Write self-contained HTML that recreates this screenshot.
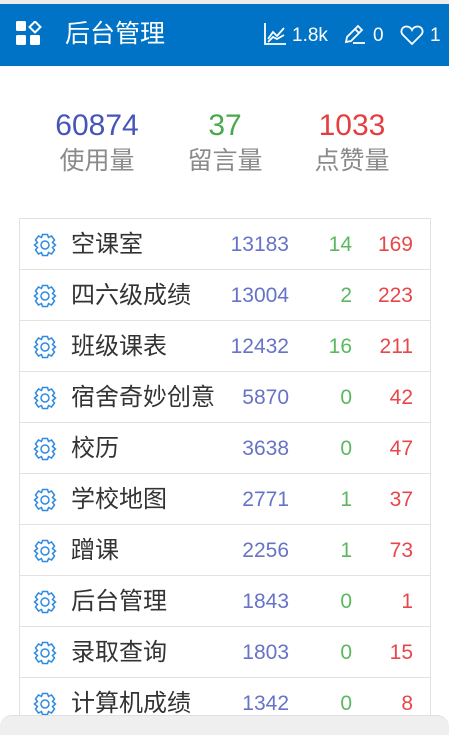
<!DOCTYPE html>
<html><head><meta charset="utf-8">
<style>
*{margin:0;padding:0;box-sizing:border-box}
body{width:449px;height:729px;overflow:hidden;background:#fff;font-family:"Liberation Sans","Noto Sans CJK SC",sans-serif;position:relative}
.top{position:absolute;left:0;top:0;width:449px;height:4px;background:#ececec}
.hdr{position:absolute;left:0;top:4px;width:449px;height:62px;background:#0073c6;color:#fff}
.hdr .t{position:absolute;left:65px;top:15px;font-size:25px;line-height:30px}
.hdr .r{position:absolute;top:20px;font-size:19px;line-height:24px}
.stat{position:absolute;top:108px;width:130px;text-align:center}
.stat .n{font-size:30px;line-height:36px}
.stat .l{font-size:25px;line-height:32px;color:#8a8a8a;margin-top:1px}
.tbl{position:absolute;left:19px;top:218px;width:412px;border:1px solid #e2e2e2;border-bottom:none}
.row{height:51px;border-bottom:1px solid #e2e2e2;position:relative}
.row svg{position:absolute;left:13px;top:14px}
.row .nm{position:absolute;left:51px;top:11px;font-size:24px;line-height:30px;color:#333}
.row .a,.row .b,.row .c{position:absolute;top:12px;font-size:21px;line-height:28px;text-align:right}
.a{right:141px;color:#6673c6}
.b{right:78px;color:#5cb860}
.c{right:17px;color:#e8474a}
.bot{position:absolute;left:0;top:715px;width:449px;height:20px;background:#efefef;border-radius:12px 12px 0 0;border-top:1px solid #e0e0e0}
</style></head><body>
<div class="top"></div>
<div class="hdr">
<svg style="position:absolute;left:16px;top:17px" width="26" height="26" viewBox="0 0 26 26" fill="#fff"><rect x="0" y="0" width="10" height="10" rx="1.5"/><rect x="0" y="14" width="10" height="10" rx="1.5"/><rect x="14" y="14" width="10" height="10" rx="1.5"/><path d="M19 0.5 L24.5 6 L19 11.5 L13.5 6Z" fill="none" stroke="#fff" stroke-width="2"/></svg>
<div class="t">后台管理</div>
<svg style="position:absolute;left:263px;top:18px" width="24" height="24" viewBox="0 0 24 24" fill="none" stroke="#fff" stroke-width="1.8"><path d="M2 1V22H23"/><path d="M5 17L10 10L14 14L21 6"/><path d="M5 20L10 15L14 17L21 13"/></svg>
<div class="r" style="left:292px">1.8k</div>
<svg style="position:absolute;left:343px;top:19px" width="24" height="22" viewBox="0 0 24 22" fill="none" stroke="#fff" stroke-width="1.8"><path d="M3 19L4 14L15 3L19 7L8 18Z"/><path d="M12 6L16 10"/><path d="M10 20H22"/></svg>
<div class="r" style="left:373px">0</div>
<svg style="position:absolute;left:400px;top:20px" width="24" height="22" viewBox="0 0 24 22" fill="none" stroke="#fff" stroke-width="1.8"><path d="M12 20L3 11C0 8 1.5 3 6 2.5C9 2.3 11 4 12 6C13 4 15 2.3 18 2.5C22.5 3 24 8 21 11Z"/></svg>
<div class="r" style="left:430px">1</div>
</div>
<div class="stat" style="left:32px"><div class="n" style="color:#4555b8">60874</div><div class="l">使用量</div></div>
<div class="stat" style="left:160px"><div class="n" style="color:#4aa84e">37</div><div class="l">留言量</div></div>
<div class="stat" style="left:287px"><div class="n" style="color:#e53e40">1033</div><div class="l">点赞量</div></div>
<div class="tbl">
<div class="row"><svg width="24" height="24" viewBox="0 0 24 24" fill="none" stroke="#2f8be0" stroke-width="1.5"><path d="M9.5 1.5H14.5L15.5 4.5L18.5 3L21.5 7L19.5 9.5L22.5 12L19.5 14.5L21.5 17L18.5 21L15.5 19.5L14.5 22.5H9.5L8.5 19.5L5.5 21L2.5 17L4.5 14.5L1.5 12L4.5 9.5L2.5 7L5.5 3L8.5 4.5Z"/><circle cx="12" cy="12" r="4"/></svg><span class="nm">空课室</span><span class="a">13183</span><span class="b">14</span><span class="c">169</span></div>
<div class="row"><svg width="24" height="24" viewBox="0 0 24 24" fill="none" stroke="#2f8be0" stroke-width="1.5"><path d="M9.5 1.5H14.5L15.5 4.5L18.5 3L21.5 7L19.5 9.5L22.5 12L19.5 14.5L21.5 17L18.5 21L15.5 19.5L14.5 22.5H9.5L8.5 19.5L5.5 21L2.5 17L4.5 14.5L1.5 12L4.5 9.5L2.5 7L5.5 3L8.5 4.5Z"/><circle cx="12" cy="12" r="4"/></svg><span class="nm">四六级成绩</span><span class="a">13004</span><span class="b">2</span><span class="c">223</span></div>
<div class="row"><svg width="24" height="24" viewBox="0 0 24 24" fill="none" stroke="#2f8be0" stroke-width="1.5"><path d="M9.5 1.5H14.5L15.5 4.5L18.5 3L21.5 7L19.5 9.5L22.5 12L19.5 14.5L21.5 17L18.5 21L15.5 19.5L14.5 22.5H9.5L8.5 19.5L5.5 21L2.5 17L4.5 14.5L1.5 12L4.5 9.5L2.5 7L5.5 3L8.5 4.5Z"/><circle cx="12" cy="12" r="4"/></svg><span class="nm">班级课表</span><span class="a">12432</span><span class="b">16</span><span class="c">211</span></div>
<div class="row"><svg width="24" height="24" viewBox="0 0 24 24" fill="none" stroke="#2f8be0" stroke-width="1.5"><path d="M9.5 1.5H14.5L15.5 4.5L18.5 3L21.5 7L19.5 9.5L22.5 12L19.5 14.5L21.5 17L18.5 21L15.5 19.5L14.5 22.5H9.5L8.5 19.5L5.5 21L2.5 17L4.5 14.5L1.5 12L4.5 9.5L2.5 7L5.5 3L8.5 4.5Z"/><circle cx="12" cy="12" r="4"/></svg><span class="nm">宿舍奇妙创意</span><span class="a">5870</span><span class="b">0</span><span class="c">42</span></div>
<div class="row"><svg width="24" height="24" viewBox="0 0 24 24" fill="none" stroke="#2f8be0" stroke-width="1.5"><path d="M9.5 1.5H14.5L15.5 4.5L18.5 3L21.5 7L19.5 9.5L22.5 12L19.5 14.5L21.5 17L18.5 21L15.5 19.5L14.5 22.5H9.5L8.5 19.5L5.5 21L2.5 17L4.5 14.5L1.5 12L4.5 9.5L2.5 7L5.5 3L8.5 4.5Z"/><circle cx="12" cy="12" r="4"/></svg><span class="nm">校历</span><span class="a">3638</span><span class="b">0</span><span class="c">47</span></div>
<div class="row"><svg width="24" height="24" viewBox="0 0 24 24" fill="none" stroke="#2f8be0" stroke-width="1.5"><path d="M9.5 1.5H14.5L15.5 4.5L18.5 3L21.5 7L19.5 9.5L22.5 12L19.5 14.5L21.5 17L18.5 21L15.5 19.5L14.5 22.5H9.5L8.5 19.5L5.5 21L2.5 17L4.5 14.5L1.5 12L4.5 9.5L2.5 7L5.5 3L8.5 4.5Z"/><circle cx="12" cy="12" r="4"/></svg><span class="nm">学校地图</span><span class="a">2771</span><span class="b">1</span><span class="c">37</span></div>
<div class="row"><svg width="24" height="24" viewBox="0 0 24 24" fill="none" stroke="#2f8be0" stroke-width="1.5"><path d="M9.5 1.5H14.5L15.5 4.5L18.5 3L21.5 7L19.5 9.5L22.5 12L19.5 14.5L21.5 17L18.5 21L15.5 19.5L14.5 22.5H9.5L8.5 19.5L5.5 21L2.5 17L4.5 14.5L1.5 12L4.5 9.5L2.5 7L5.5 3L8.5 4.5Z"/><circle cx="12" cy="12" r="4"/></svg><span class="nm">蹭课</span><span class="a">2256</span><span class="b">1</span><span class="c">73</span></div>
<div class="row"><svg width="24" height="24" viewBox="0 0 24 24" fill="none" stroke="#2f8be0" stroke-width="1.5"><path d="M9.5 1.5H14.5L15.5 4.5L18.5 3L21.5 7L19.5 9.5L22.5 12L19.5 14.5L21.5 17L18.5 21L15.5 19.5L14.5 22.5H9.5L8.5 19.5L5.5 21L2.5 17L4.5 14.5L1.5 12L4.5 9.5L2.5 7L5.5 3L8.5 4.5Z"/><circle cx="12" cy="12" r="4"/></svg><span class="nm">后台管理</span><span class="a">1843</span><span class="b">0</span><span class="c">1</span></div>
<div class="row"><svg width="24" height="24" viewBox="0 0 24 24" fill="none" stroke="#2f8be0" stroke-width="1.5"><path d="M9.5 1.5H14.5L15.5 4.5L18.5 3L21.5 7L19.5 9.5L22.5 12L19.5 14.5L21.5 17L18.5 21L15.5 19.5L14.5 22.5H9.5L8.5 19.5L5.5 21L2.5 17L4.5 14.5L1.5 12L4.5 9.5L2.5 7L5.5 3L8.5 4.5Z"/><circle cx="12" cy="12" r="4"/></svg><span class="nm">录取查询</span><span class="a">1803</span><span class="b">0</span><span class="c">15</span></div>
<div class="row"><svg width="24" height="24" viewBox="0 0 24 24" fill="none" stroke="#2f8be0" stroke-width="1.5"><path d="M9.5 1.5H14.5L15.5 4.5L18.5 3L21.5 7L19.5 9.5L22.5 12L19.5 14.5L21.5 17L18.5 21L15.5 19.5L14.5 22.5H9.5L8.5 19.5L5.5 21L2.5 17L4.5 14.5L1.5 12L4.5 9.5L2.5 7L5.5 3L8.5 4.5Z"/><circle cx="12" cy="12" r="4"/></svg><span class="nm">计算机成绩</span><span class="a">1342</span><span class="b">0</span><span class="c">8</span></div>
</div>
<div class="bot"></div>
</body></html>
